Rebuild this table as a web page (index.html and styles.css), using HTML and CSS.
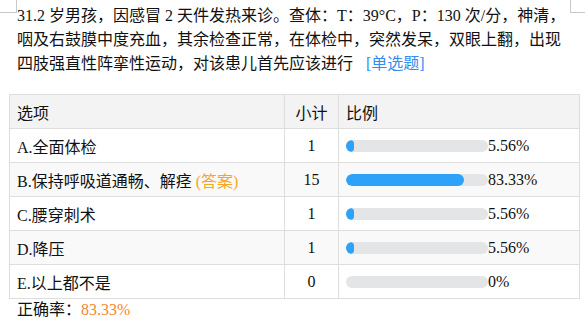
FILE: index.html
```html
<!DOCTYPE html>
<html lang="zh">
<head>
<meta charset="utf-8">
<link rel="stylesheet" href="styles.css">
</head>
<body>
<div class="page">
  <span class="mark mark-tl"></span>
  <span class="mark mark-tr"></span>
  <p class="question"><span class="qtext">31.2 岁男孩，因感冒 2 天件发热来诊。查体：T：39°C，P：130 次/分，神清，咽及右鼓膜中度充血，其余检查正常，在体检中，突然发呆，双眼上翻，出现四肢强直性阵挛性运动，对该患儿首先应该进行</span><span class="qtype">[单选题]</span></p>
  <table class="stats">
    <colgroup><col class="c-opt"><col class="c-num"><col class="c-pct"></colgroup>
    <thead>
      <tr><th>选项</th><th class="num">小计</th><th>比例</th></tr>
    </thead>
    <tbody>
      <tr><td>A.全面体检</td><td class="num">1</td><td><div class="pct"><span class="bar"><span class="fill" style="width:5.56%"></span></span>5.56%</div></td></tr>
      <tr class="alt"><td>B.保持呼吸道通畅、解痉 <span class="ans">(答案)</span></td><td class="num">15</td><td><div class="pct"><span class="bar"><span class="fill" style="width:83.33%"></span></span>83.33%</div></td></tr>
      <tr><td>C.腰穿刺术</td><td class="num">1</td><td><div class="pct"><span class="bar"><span class="fill" style="width:5.56%"></span></span>5.56%</div></td></tr>
      <tr class="alt"><td>D.降压</td><td class="num">1</td><td><div class="pct"><span class="bar"><span class="fill" style="width:5.56%"></span></span>5.56%</div></td></tr>
      <tr><td>E.以上都不是</td><td class="num">0</td><td><div class="pct"><span class="bar"><span class="fill" style="width:0%"></span></span>0%</div></td></tr>
    </tbody>
  </table>
  <div class="rate">正确率：<span class="rate-val">83.33%</span></div>
</div>
</body>
</html>
```

FILE: styles.css
```css
html, body {
  margin: 0;
  padding: 0;
  background: #fff;
}
body {
  font-family: "Liberation Serif", "Noto Sans CJK SC", serif;
  font-size: 16px;
  color: #111;
}
.page {
  position: relative;
  width: 585px;
  height: 328px;
  overflow: hidden;
}
.mark {
  position: absolute;
  top: 0;
  width: 16px;
  height: 12px;
  border-bottom: 1px solid #c9c9c9;
}
.mark-tl {
  left: 0;
  border-right: 1px solid #c9c9c9;
}
.mark-tr {
  left: 570px;
  border-left: 1px solid #c9c9c9;
}
.question {
  margin: 0;
  padding: 4px 16px 0 17px;
  line-height: 24px;
}
.qtype {
  display: inline-block;
  margin-left: 13px;
  color: #2f8ef0;
}
.stats {
  margin: 18px 0 0 9px;
  width: 570px;
  border-collapse: collapse;
  table-layout: fixed;
}
.c-opt { width: 275px; }
.c-num { width: 54px; }
.c-pct { width: 241px; }
.stats th,
.stats td {
  border: 1px solid #dedede;
  height: 34px;
  padding: 0 0 0 7px;
  text-align: left;
  font-weight: normal;
  box-sizing: border-box;
}
.stats thead th {
  background: #f3f3f3;
}
.stats th.num,
.stats td.num {
  text-align: center;
  padding: 0;
}
.stats tr.alt td {
  background: #f9f9f9;
}
.ans {
  color: #f5a623;
}
.pct {
  display: flex;
  align-items: center;
}
.bar {
  display: block;
  width: 142px;
  height: 12px;
  border-radius: 6px;
  background: #e4e5e7;
  overflow: hidden;
}
.fill {
  display: block;
  height: 100%;
  background: #2ea1f8;
  border-radius: 6px;
}
.rate {
  padding: 0 0 0 17px;
  line-height: 22px;
}
.rate-val {
  color: #f7862a;
}
```
